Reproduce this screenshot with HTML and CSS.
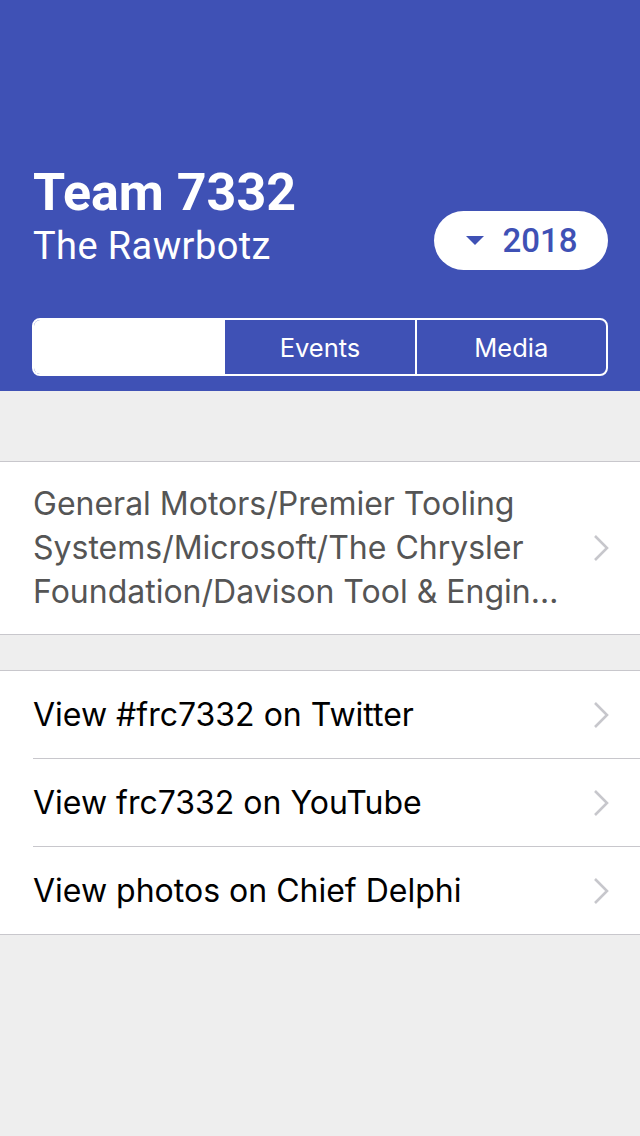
FILE: index.html
```html
<!DOCTYPE html>
<html>
<head>
<meta charset="utf-8">
<link rel="stylesheet" href="styles.css">
</head>
<body>
<div class="page">
  <header class="hero">
    <div class="hero-main">
      <div class="titles">
        <div class="team">Team 7332</div>
        <div class="nick">The Rawrbotz</div>
      </div>
      <div class="year">
        <svg class="caret" width="18" height="10" viewBox="0 0 18 10"><polygon points="0,0 18,0 9,9" fill="#3f51b5"/></svg>
        <span>2018</span>
      </div>
    </div>
    <div class="segments">
      <div class="seg active"><span>Info</span></div>
      <div class="seg">Events</div>
      <div class="seg">Media</div>
    </div>
  </header>
  <section class="group first">
    <div class="row sponsor">
      <div class="text">General Motors/Premier Tooling Systems/Microsoft/The Chrysler Foundation/Davison Tool &amp; Engin…</div>
      <svg class="chev" width="16" height="28" viewBox="0 0 16 28"><polyline points="2,2 14,14 2,26" fill="none" stroke="#c7c7cc" stroke-width="2.6"/></svg>
    </div>
  </section>
  <section class="group">
    <div class="row link">
      <div class="text">View #frc7332 on Twitter</div>
      <svg class="chev" width="16" height="28" viewBox="0 0 16 28"><polyline points="2,2 14,14 2,26" fill="none" stroke="#c7c7cc" stroke-width="2.6"/></svg>
    </div>
    <div class="row link">
      <div class="text">View frc7332 on YouTube</div>
      <svg class="chev" width="16" height="28" viewBox="0 0 16 28"><polyline points="2,2 14,14 2,26" fill="none" stroke="#c7c7cc" stroke-width="2.6"/></svg>
    </div>
    <div class="row link">
      <div class="text">View photos on Chief Delphi</div>
      <svg class="chev" width="16" height="28" viewBox="0 0 16 28"><polyline points="2,2 14,14 2,26" fill="none" stroke="#c7c7cc" stroke-width="2.6"/></svg>
    </div>
  </section>
</div>
</body>
</html>
```
FILE: styles.css
```css
html, body {
  margin: 0;
  padding: 0;
  background: #eeeeee;
}
body {
  font-family: Inter, Roboto, "Liberation Sans", sans-serif;
  width: 640px;
  height: 1136px;
  overflow: hidden;
}
.hero {
  background: #3f51b5;
  height: 391px;
  box-sizing: border-box;
  padding: 163px 32px 0 33px;
  color: #fff;
}
.hero-main {
  display: flex;
  align-items: flex-end;
  justify-content: space-between;
}
.team {
  font-family: Roboto, "Liberation Sans", sans-serif;
  font-size: 52px;
  font-weight: 700;
  line-height: 60px;
}
.nick {
  font-family: Roboto, "Liberation Sans", sans-serif;
  font-size: 38px;
  line-height: 46px;
  font-weight: 400;
  letter-spacing: 0.4px;
}
.year {
  background: #fff;
  border-radius: 30px;
  width: 174px;
  height: 59px;
  display: flex;
  align-items: center;
  justify-content: center;
  gap: 18px;
  color: #3f51b5;
  font-family: Roboto, "Liberation Sans", sans-serif;
  font-size: 33px;
  font-weight: 500;
  margin-bottom: -1px;
}
.caret { margin-left: 2px; }
.segments {
  margin-top: 49px;
  height: 58px;
  box-sizing: border-box;
  border: 2px solid #fff;
  border-radius: 8px;
  display: flex;
  overflow: hidden;
  margin-left: -1px;
}
.seg {
  flex: 1;
  display: flex;
  align-items: center;
  justify-content: center;
  font-size: 25.5px;
  color: #fff;
  border-left: 2px solid #fff;
}
.seg:first-child { border-left: none; }
.seg.active { background: #fff; }
.seg.active span { visibility: hidden; }
.group {
  background: #fff;
  border-top: 1px solid #c8c7cc;
  border-bottom: 1px solid #c8c7cc;
  margin-top: 35px;
}
.group.first { margin-top: 70px; }
.row {
  display: flex;
  align-items: center;
  justify-content: space-between;
  padding: 0 31px 0 33px;
}
.row.sponsor {
  height: 172px;
}
.sponsor .text {
  color: #555555;
  font-size: 32px;
  line-height: 44px;
  width: 545px;
}
.row.link {
  height: 87px;
}
.row.link + .row.link {
  border-top: 1px solid #c8c7cc;
  margin-left: 33px;
  padding-left: 0;
}
.link .text {
  color: #000;
  font-size: 32px;
}
.chev { flex: none; }
```
